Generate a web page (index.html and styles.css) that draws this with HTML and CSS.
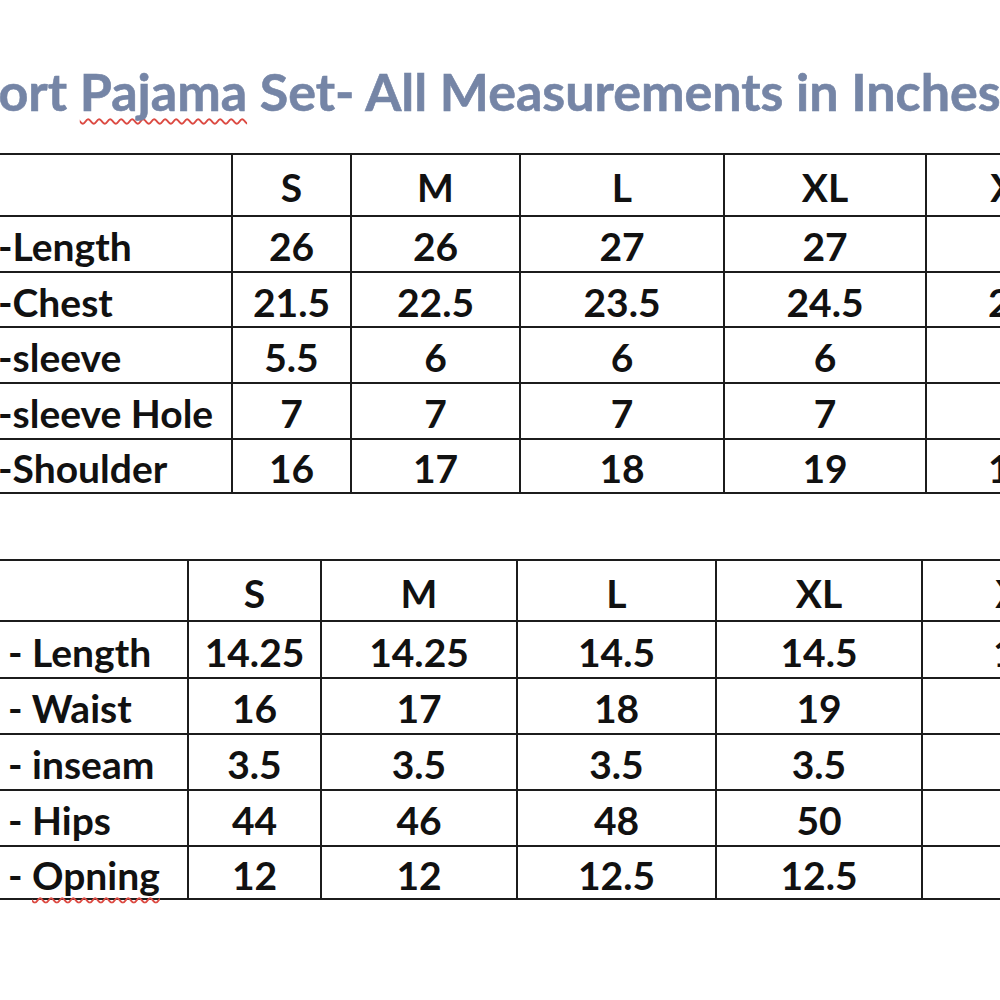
FILE: index.html
```html
<!DOCTYPE html>
<html lang="en">
<head>
<meta charset="utf-8">
<title>Short Pajama Set - Size Chart</title>
<link rel="stylesheet" href="styles.css">
</head>
<body>
<main class="page">
  <h1 class="title"><span class="cut">Sh</span>ort <span class="spell">Pajama</span> Set- All Measurements in Inches</h1>

  <table class="chart chart-top">
    <colgroup>
      <col class="c-label">
      <col class="c-s">
      <col class="c-m">
      <col class="c-l">
      <col class="c-xl">
      <col class="c-xxl">
    </colgroup>
    <tr class="head"><td></td><td>S</td><td>M</td><td>L</td><td>XL</td><td>XXL</td></tr>
    <tr class="r1"><td class="label">-Length</td><td>26</td><td>26</td><td>27</td><td>27</td><td>28</td></tr>
    <tr class="r2"><td class="label">-Chest</td><td>21.5</td><td>22.5</td><td>23.5</td><td>24.5</td><td>25.5</td></tr>
    <tr class="r3"><td class="label">-sleeve</td><td>5.5</td><td>6</td><td>6</td><td>6</td><td>6</td></tr>
    <tr class="r4"><td class="label">-sleeve Hole</td><td>7</td><td>7</td><td>7</td><td>7</td><td>8</td></tr>
    <tr class="r5"><td class="label">-Shoulder</td><td>16</td><td>17</td><td>18</td><td>19</td><td>19.5</td></tr>
  </table>

  <table class="chart chart-bottom">
    <colgroup>
      <col class="d-label">
      <col class="d-s">
      <col class="d-m">
      <col class="d-l">
      <col class="d-xl">
      <col class="d-xxl">
    </colgroup>
    <tr class="head"><td></td><td>S</td><td>M</td><td>L</td><td>XL</td><td>XXL</td></tr>
    <tr class="q1"><td class="label2">- Length</td><td>14.25</td><td>14.25</td><td>14.5</td><td>14.5</td><td>15.5</td></tr>
    <tr class="q2"><td class="label2">- Waist</td><td>16</td><td>17</td><td>18</td><td>19</td><td>20</td></tr>
    <tr class="q3"><td class="label2">- inseam</td><td>3.5</td><td>3.5</td><td>3.5</td><td>3.5</td><td>4</td></tr>
    <tr class="q4"><td class="label2">- Hips</td><td>44</td><td>46</td><td>48</td><td>50</td><td>52</td></tr>
    <tr class="q5"><td class="label2">- <span class="spell">Opning</span></td><td>12</td><td>12</td><td>12.5</td><td>12.5</td><td>13</td></tr>
  </table>
</main>
</body>
</html>
```

FILE: styles.css
```css
html, body {
  margin: 0;
  padding: 0;
  background: #ffffff;
}

body {
  width: 1000px;
  height: 1000px;
  overflow: hidden;
  font-family: Lato, "Liberation Sans", sans-serif;
  font-weight: 700;
  color: #111111;
}

.page {
  padding-top: 63px;
}

.title {
  margin: 0 0 0 -59px;
  font-size: 52px;
  line-height: 56px;
  font-weight: 700;
  color: #7585a6;
  white-space: nowrap;
  -webkit-text-stroke: 0.6px #7585a6;
}

.spell {
  text-decoration: underline wavy #dc4a42;
  text-decoration-thickness: 1.5px;
  text-underline-offset: 7px;
  text-decoration-skip-ink: none;
}

.chart {
  border-collapse: collapse;
  table-layout: fixed;
  margin-left: -40px;
  font-size: 39px;
  line-height: 40px;
}

.chart td {
  border: 2px solid #1c1c1c;
  text-align: center;
  vertical-align: middle;
  padding: 4px 0 0 0;
  white-space: nowrap;
}

.chart td.label,
.chart td.label2 {
  text-align: left;
}

.chart td.label {
  padding-left: 36px;
}

.chart td.label2 {
  padding-left: 46px;
}

/* top table */
.chart-top {
  margin-top: 34px;
  width: 1166px;
}
.c-label { width: 271px; }
.c-s { width: 119px; }
.c-m { width: 169px; }
.c-l { width: 204px; }
.c-xl { width: 202px; }
.c-xxl { width: 201px; }

.chart-top .head { height: 62px; }
.chart-top .r1 { height: 56px; }
.chart-top .r2 { height: 55px; }
.chart-top .r3 { height: 56px; }
.chart-top .r4 { height: 56px; }
.chart-top .r5 { height: 54px; }

/* bottom table */
.chart-bottom {
  margin-top: 65px;
  width: 1180px;
}
.d-label { width: 227px; }
.d-s { width: 133px; }
.d-m { width: 196px; }
.d-l { width: 199px; }
.d-xl { width: 206px; }
.d-xxl { width: 219px; }

.chart-bottom .head { height: 61px; }
.chart-bottom .q1 { height: 57px; }
.chart-bottom .q2 { height: 56px; }
.chart-bottom .q3 { height: 56px; }
.chart-bottom .q4 { height: 56px; }
.chart-bottom .q5 { height: 53px; }
```
